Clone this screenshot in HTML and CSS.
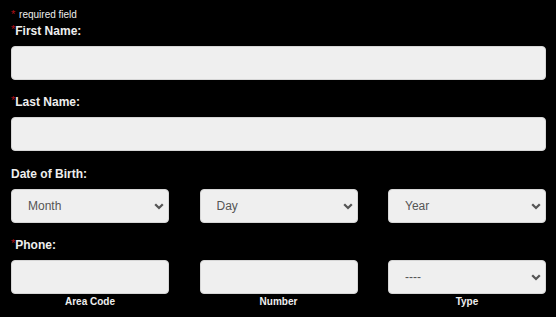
FILE: index.html
```html
<!DOCTYPE html>
<html>
<head>
<meta charset="utf-8">
<link rel="stylesheet" href="styles.css">
</head>
<body>
<form class="form">
  <div class="req-note"><span class="star">*</span> required field</div>

  <div class="group">
    <label class="label"><span class="star">*</span>First Name:</label>
    <input class="field" type="text">
  </div>

  <div class="group group-wide">
    <label class="label"><span class="star">*</span>Last Name:</label>
    <input class="field" type="text">
  </div>

  <div class="group">
    <label class="label">Date of Birth:</label>
    <div class="row">
      <div class="select-wrap">
        <select class="field select"><option>Month</option></select>
        <svg class="chev" width="10" height="7" viewBox="0 0 10 7"><path d="M1.2 1.3 L5 5 L8.8 1.3" fill="none" stroke="#555" stroke-width="2.3"/></svg>
      </div>
      <div class="select-wrap">
        <select class="field select"><option>Day</option></select>
        <svg class="chev" width="10" height="7" viewBox="0 0 10 7"><path d="M1.2 1.3 L5 5 L8.8 1.3" fill="none" stroke="#555" stroke-width="2.3"/></svg>
      </div>
      <div class="select-wrap">
        <select class="field select"><option>Year</option></select>
        <svg class="chev" width="10" height="7" viewBox="0 0 10 7"><path d="M1.2 1.3 L5 5 L8.8 1.3" fill="none" stroke="#555" stroke-width="2.3"/></svg>
      </div>
    </div>
  </div>

  <div class="group">
    <label class="label"><span class="star">*</span>Phone:</label>
    <div class="row">
      <div class="col">
        <input class="field" type="text">
        <div class="sub">Area Code</div>
      </div>
      <div class="col">
        <input class="field" type="text">
        <div class="sub">Number</div>
      </div>
      <div class="col">
        <div class="select-wrap">
          <select class="field select"><option>----</option></select>
          <svg class="chev" width="10" height="7" viewBox="0 0 10 7"><path d="M1.2 1.3 L5 5 L8.8 1.3" fill="none" stroke="#555" stroke-width="2.3"/></svg>
        </div>
        <div class="sub">Type</div>
      </div>
    </div>
  </div>
</form>
</body>
</html>
```

FILE: styles.css
```css
html, body {
  margin: 0;
  padding: 0;
  background: #000;
}
body {
  font-family: "Liberation Sans", Arial, sans-serif;
  color: #eee;
}
.form {
  padding: 9px 10px 0 11px;
}
.req-note {
  font-size: 10px;
  line-height: 12px;
  color: #eee;
  margin-bottom: 3px;
}
.star {
  color: #b01018;
  font-size: 11px;
  vertical-align: top;
  line-height: 11px;
  font-weight: normal;
  margin-right: 1px;
}
.label .star {
  position: relative;
  top: 0;
  margin-right: 0;
}
.group {
  margin-bottom: 15px;
}
.group-wide {
  margin-bottom: 16px;
}
.label {
  display: block;
  font-size: 12px;
  font-weight: bold;
  line-height: 14px;
  margin-bottom: 8px;
  color: #eee;
}
.field {
  display: block;
  box-sizing: border-box;
  width: 100%;
  height: 34px;
  margin: 0;
  background: #efefef;
  border: 1px solid #d6d6d6;
  border-radius: 4px;
  font-family: "Liberation Sans", Arial, sans-serif;
  font-size: 12px;
  color: #555;
  outline: none;
}
.row {
  display: grid;
  grid-template-columns: 158px 158px 158px;
  justify-content: space-between;
}
.select-wrap {
  position: relative;
}
.select {
  -webkit-appearance: none;
  appearance: none;
  padding: 0 0 0 16px;
}
.chev {
  position: absolute;
  right: 5px;
  top: 14px;
  pointer-events: none;
}
.sub {
  font-size: 10px;
  font-weight: bold;
  line-height: 12px;
  text-align: center;
  margin-top: 2px;
  color: #eee;
}
```
